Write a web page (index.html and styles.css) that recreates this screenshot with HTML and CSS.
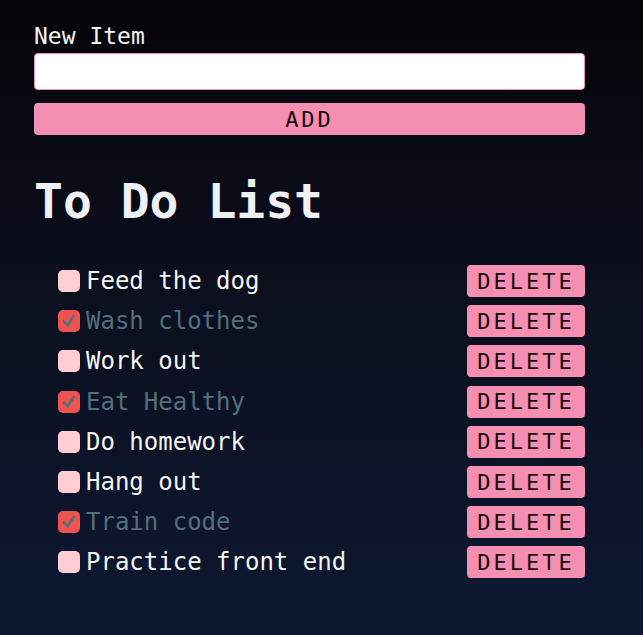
FILE: index.html
```html
<!DOCTYPE html>
<html>
<head>
<meta charset="utf-8">
<link rel="stylesheet" href="styles.css">
</head>
<body>
<main class="app">
  <form class="new-item">
    <label class="label" for="item">New Item</label>
    <input class="input" id="item" type="text">
    <button class="btn add" type="button">ADD</button>
  </form>
  <h1 class="title">To Do List</h1>
  <ul class="list">
    <li class="row"><span class="box"></span><span class="text">Feed the dog</span><button class="btn del" type="button">DELETE</button></li>
    <li class="row done"><span class="box checked"><svg viewBox="0 0 22 22" width="22" height="22"><path d="M6 11.5 L9.5 15.5 L15.5 6" fill="none" stroke="#546e7a" stroke-width="2.6" stroke-linecap="round" stroke-linejoin="round"/></svg></span><span class="text">Wash clothes</span><button class="btn del" type="button">DELETE</button></li>
    <li class="row"><span class="box"></span><span class="text">Work out</span><button class="btn del" type="button">DELETE</button></li>
    <li class="row done"><span class="box checked"><svg viewBox="0 0 22 22" width="22" height="22"><path d="M6 11.5 L9.5 15.5 L15.5 6" fill="none" stroke="#546e7a" stroke-width="2.6" stroke-linecap="round" stroke-linejoin="round"/></svg></span><span class="text">Eat Healthy</span><button class="btn del" type="button">DELETE</button></li>
    <li class="row"><span class="box"></span><span class="text">Do homework</span><button class="btn del" type="button">DELETE</button></li>
    <li class="row"><span class="box"></span><span class="text">Hang out</span><button class="btn del" type="button">DELETE</button></li>
    <li class="row done"><span class="box checked"><svg viewBox="0 0 22 22" width="22" height="22"><path d="M6 11.5 L9.5 15.5 L15.5 6" fill="none" stroke="#546e7a" stroke-width="2.6" stroke-linecap="round" stroke-linejoin="round"/></svg></span><span class="text">Train code</span><button class="btn del" type="button">DELETE</button></li>
    <li class="row"><span class="box"></span><span class="text">Practice front end</span><button class="btn del" type="button">DELETE</button></li>
  </ul>
</main>
</body>
</html>
```
FILE: styles.css
```css
html, body {
  margin: 0;
  height: 100%;
}
body {
  background: linear-gradient(to bottom, #050508 0%, #0b0f1e 45%, #0d1831 100%);
  font-family: "DejaVu Sans Mono", "Liberation Mono", monospace;
  color: #f6f4f0;
}
.app {
  width: 551px;
  padding: 22px 0 0 34px;
}
.new-item {
  display: flex;
  flex-direction: column;
}
.label {
  font-size: 23px;
  line-height: 28px;
  color: #f6f4f0;
}
.input {
  margin-top: 3px;
  height: 37px;
  box-sizing: border-box;
  border: 1px solid #f48fb1;
  border-radius: 4px;
  background: #fff;
  font: inherit;
  padding: 0 8px;
}
.btn {
  background: #f48fb1;
  border: none;
  border-radius: 4px;
  color: #1a0a10;
  font-family: "DejaVu Sans Mono", "Liberation Mono", monospace;
  font-size: 22px;
  letter-spacing: 3px;
  height: 32px;
  padding: 0;
  cursor: pointer;
}
.add {
  margin-top: 13px;
  width: 100%;
}
.title {
  margin: 34px 0 0 0;
  font-size: 48px;
  line-height: 64px;
  font-weight: bold;
  color: #eef0f4;
}
.list {
  list-style: none;
  margin: 28px 0 0 0;
  padding: 0 0 0 24px;
}
.row {
  display: flex;
  align-items: center;
  height: 40.2px;
}
.box {
  width: 22px;
  height: 22px;
  border-radius: 5px;
  background: #ffcdd2;
  flex: none;
  display: flex;
}
.box.checked {
  background: #ef5350;
}
.text {
  margin-left: 6px;
  font-size: 24px;
  flex: 1;
}
.done .text {
  color: #546e7a;
}
.del {
  width: 118px;
  flex: none;
}
```
